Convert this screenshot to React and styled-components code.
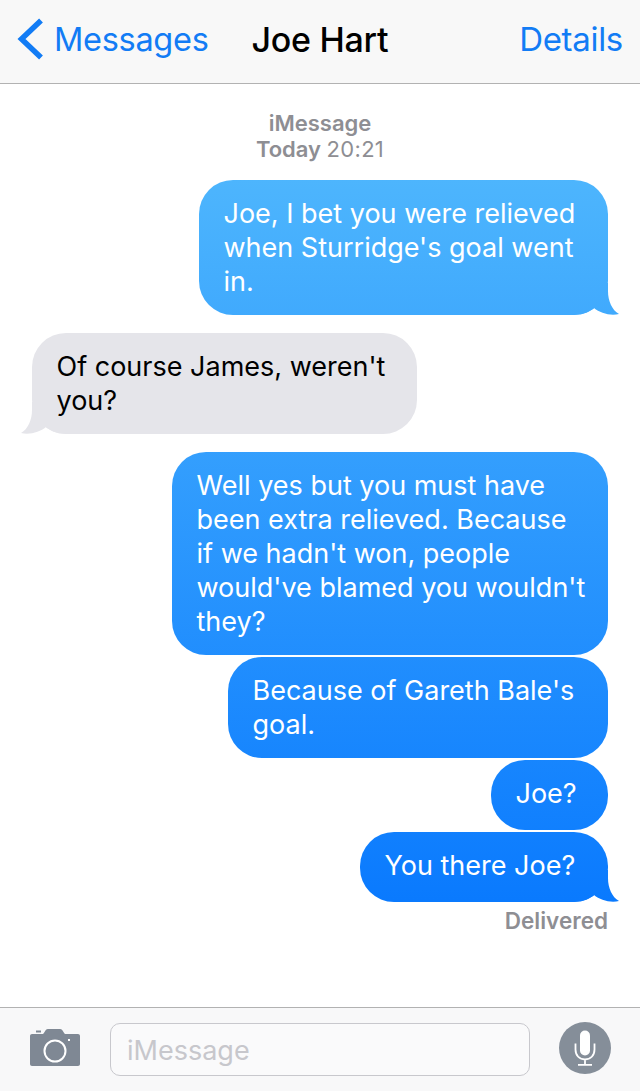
import React from "react";
import styled, { createGlobalStyle } from "styled-components";

const font = `Inter, "Liberation Sans", sans-serif`;
const sentGradient = "linear-gradient(180deg, #4db5fd 180px, #0a7afe 900px) fixed";

const GlobalStyle = createGlobalStyle`
  html, body {
    margin: 0;
    padding: 0;
    background: #fff;
  }
  body {
    font-family: ${font};
  }
`;

const Screen = styled.div`
  width: 640px;
  height: 1091px;
  display: flex;
  flex-direction: column;
  overflow: hidden;
`;

const NavBar = styled.header`
  box-sizing: border-box;
  height: 84px;
  flex: none;
  background: #f8f8f8;
  border-bottom: 1px solid #b2b2b2;
  display: flex;
  align-items: center;
  padding: 0 17px 5px;
`;

const BackLink = styled.a`
  display: flex;
  align-items: center;
  gap: 10px;
  color: #127cf5;
  font-size: 32.5px;
  letter-spacing: -0.3px;
`;

const Title = styled.div`
  flex: 1;
  padding-left: 43px;
  font-size: 34px;
  font-weight: 500;
  letter-spacing: -0.3px;
  color: #000;
`;

const Action = styled.a`
  color: #127cf5;
  font-size: 33px;
  letter-spacing: -0.3px;
`;

const Thread = styled.main`
  flex: 1;
  display: flex;
  flex-direction: column;
  padding: 26px 32px 0;
`;

const Meta = styled.div`
  text-align: center;
  font-size: 22px;
  line-height: 26px;
  color: #8e8e93;
  font-weight: 600;
  margin-bottom: 18px;

  span {
    font-weight: 400;
    letter-spacing: 0.3px;
  }
`;

const Bubble = styled.div`
  box-sizing: border-box;
  width: ${({ $width }) => $width}px;
  min-height: ${({ $minHeight }) => $minHeight || 0}px;
  margin-top: ${({ $gap }) => $gap}px;
  align-self: ${({ $sent }) => ($sent ? "flex-end" : "flex-start")};
  padding: 17px 24.5px 16px;
  border-radius: 34px;
  font-size: 27px;
  line-height: 34px;
  white-space: pre;
  position: relative;
  isolation: isolate;
  color: ${({ $sent }) => ($sent ? "#fff" : "#000")};
  background: ${({ $sent }) => ($sent ? sentGradient : "#e5e5ea")};

  ${({ $tail, $sent }) =>
    $tail &&
    `&::after {
      content: "";
      position: absolute;
      z-index: -1;
      bottom: 0;
      width: 52px;
      height: 32px;
      background: ${$sent ? sentGradient : "#e5e5ea"};
      ${
        $sent
          ? `right: -12px;
      clip-path: path("M 0 32 C 12 32 20 30 26 25 C 32 30 42 33 51 31 C 44 27 40 18 40 8 L 40 0 L 0 0 Z");`
          : `left: -12px;
      clip-path: path("M 52 32 C 40 32 32 30 26 25 C 20 30 10 33 1 31 C 8 27 12 18 12 8 L 12 0 L 52 0 Z");`
      }
    }`}
`;

const Status = styled.div`
  align-self: flex-end;
  margin-top: 6px;
  font-size: 22.5px;
  line-height: 26px;
  font-weight: 600;
  color: #8e8e93;
`;

const Composer = styled.footer`
  height: 83px;
  flex: none;
  background: #f8f8f9;
  border-top: 1px solid #b2b2b2;
  display: flex;
  align-items: center;
  padding: 0 29px 0 30px;
`;

const CameraButton = styled.div`
  display: flex;
  margin: 0 30px 5px 0;
`;

const InputBox = styled.div`
  box-sizing: border-box;
  width: 420px;
  height: 53px;
  border: 1px solid #c8c8cd;
  border-radius: 10px;
  background: #fafafb;
  color: #c7c7cc;
  font-size: 27px;
  display: flex;
  align-items: center;
  padding: 2px 0 0 16px;
`;

const MicButton = styled.div`
  width: 52px;
  height: 52px;
  border-radius: 50%;
  background: #858e99;
  margin: 0 0 4px 29px;
  display: flex;
  align-items: center;
  justify-content: center;
`;

const messages = [
  { sent: true, width: 409, gap: 0, tail: true, text: "Joe, I bet you were relieved\nwhen Sturridge's goal went\nin." },
  { sent: false, width: 385, gap: 18, tail: true, text: "Of course James, weren't\nyou?" },
  { sent: true, width: 436, gap: 18, text: "Well yes but you must have\nbeen extra relieved. Because\nif we hadn't won, people\nwould've blamed you wouldn't\nthey?" },
  { sent: true, width: 380, gap: 2, text: "Because of Gareth Bale's\ngoal." },
  { sent: true, width: 117, gap: 2, minHeight: 70, text: "Joe?" },
  { sent: true, width: 248, gap: 2, minHeight: 70, tail: true, text: "You there Joe?" },
];

const Chevron = () => (
  <svg width="27" height="42" viewBox="0 0 27 42">
    <path d="M24 2.500 L4.500 21 L24 39.500" fill="none" stroke="#127cf5" strokeWidth="5.500" />
  </svg>
);

const CameraIcon = () => (
  <svg width="50" height="38" viewBox="0 0 50 38">
    <path
      d="M6 2.500h5v2H6z M2 6h10c1 0 1.600-.5 2.200-1.500l1.600-2.500c.6-.7 1.300-1 2.200-1h12c.9 0 1.600.3 2.200 1l1.600 2.500c.6 1 1.200 1.500 2.200 1.500h12c1.100 0 2 .9 2 2v28c0 1.100-.9 2-2 2H2c-1.100 0-2-.9-2-2V8c0-1.100.9-2 2-2z"
      fill="#7f8894"
    />
    <circle cx="25" cy="23" r="10.500" fill="none" stroke="#fff" strokeWidth="2" />
    <rect x="38" y="11" width="2" height="2" fill="#fff" />
  </svg>
);

const MicIcon = () => (
  <svg width="22" height="36" viewBox="0 0 22 36">
    <rect x="6" y="0.500" width="10" height="25" rx="5" fill="#fff" />
    <path d="M1.500 13.500v6c0 6 4 10 9.500 10s9.500-4 9.500-10v-6 M11 29.500v5 M4 34.800h14" fill="none" stroke="#fff" strokeWidth="1.800" />
  </svg>
);

export default function App() {
  return (
    <Screen>
      <GlobalStyle />
      <NavBar>
        <BackLink>
          <Chevron />
          Messages
        </BackLink>
        <Title>Joe Hart</Title>
        <Action>Details</Action>
      </NavBar>
      <Thread>
        <Meta>
          iMessage
          <br />
          Today <span>20:21</span>
        </Meta>
        {messages.map((m, i) => (
          <Bubble key={i} $sent={m.sent} $width={m.width} $gap={m.gap} $tail={m.tail} $minHeight={m.minHeight}>
            {m.text}
          </Bubble>
        ))}
        <Status>Delivered</Status>
      </Thread>
      <Composer>
        <CameraButton>
          <CameraIcon />
        </CameraButton>
        <InputBox>iMessage</InputBox>
        <MicButton>
          <MicIcon />
        </MicButton>
      </Composer>
    </Screen>
  );
}
